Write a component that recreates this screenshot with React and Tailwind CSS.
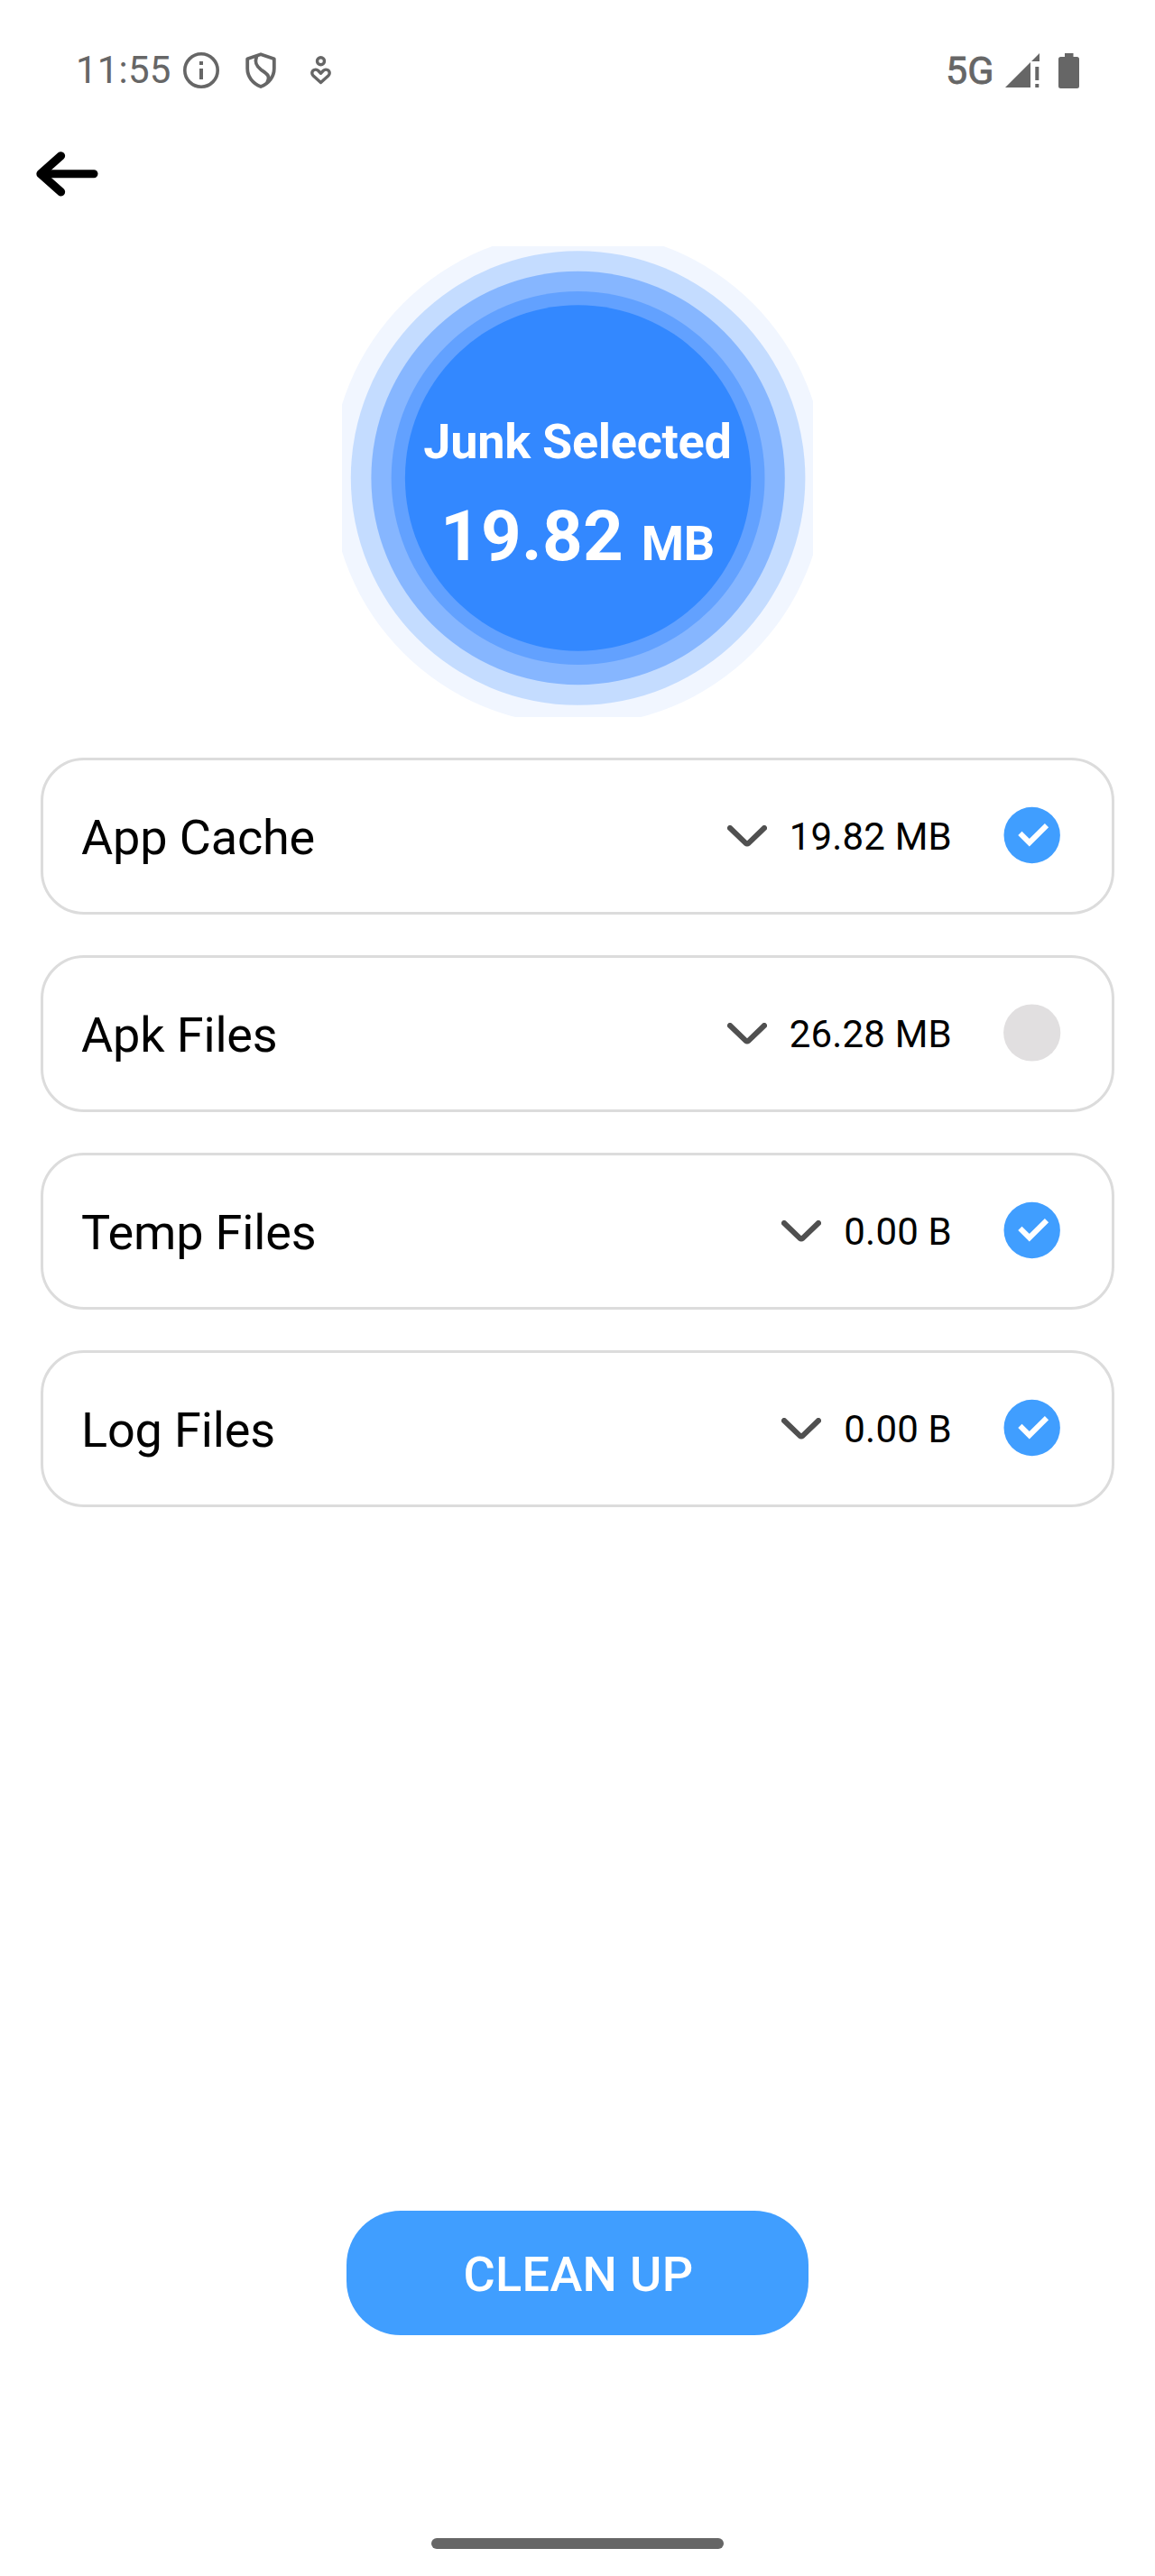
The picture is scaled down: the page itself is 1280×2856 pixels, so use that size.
import { useState } from 'react'

const initialItems = [
  { id: 'cache', name: 'App Cache', size: '19.82 MB', checked: true },
  { id: 'apk', name: 'Apk Files', size: '26.28 MB', checked: false },
  { id: 'temp', name: 'Temp Files', size: '0.00 B', checked: true },
  { id: 'log', name: 'Log Files', size: '0.00 B', checked: true },
]

function StatusBar() {
  return (
    <div className="flex h-[156px] items-center justify-between pl-[84px] pr-[84px] text-[#666666]">
      <div className="flex items-center">
        <span className="w-[119px] text-[42px] leading-none tracking-[0.2px] whitespace-nowrap">11:55</span>
        <svg className="h-10 w-10" viewBox="0 0 40 40" fill="none">
          <circle cx="20" cy="20" r="18.2" stroke="currentColor" strokeWidth="3.6" />
          <path d="M18 10h4v4h-4zM18 18h4v12h-4z" fill="currentColor" />
        </svg>
        <svg className="ml-[29px] h-10 w-[34px]" viewBox="0 0 34 40" fill="none" stroke="currentColor" strokeWidth="3.8" strokeLinejoin="round">
          <path d="M17 2.2L31.8 7.2V18C31.8 27 26 34.5 17 38C8 34.5 2.2 27 2.2 18V7.2Z" />
          <path d="M12.500 4.500C9.500 12 13 16 17.500 19.500C24 24 28 26 24 33.500" />
        </svg>
        <svg className="ml-[38px] h-8 w-[23px]" viewBox="0 0 23 32" fill="none" stroke="currentColor" strokeWidth="3.4" strokeLinejoin="round">
          <circle cx="11.5" cy="5.8" r="4" />
          <path d="M11.5 19.2L8.6 16.3C6 13.9 1.8 15.6 1.8 19C1.8 20.5 2.5 21.3 3.2 22L11.5 29.4L19.8 22C20.5 21.3 21.2 20.5 21.2 19C21.2 15.6 17 13.9 14.4 16.3Z" />
        </svg>
      </div>
      <div className="flex items-center">
        <span className="w-[66px] text-[43px] leading-none [-webkit-text-stroke:0.8px_#666666]">5G</span>
        <svg className="h-[38px] w-[38px]" viewBox="0 0 38 38" fill="currentColor">
          <path d="M0 38L28 10V38ZM29 9L38 0V9ZM33.3 15H37.3V30H33.3ZM33.3 34H37.3V38H33.3Z" />
        </svg>
        <svg className="ml-[21px] h-[39px] w-[23px]" viewBox="0 0 23 39" fill="currentColor">
          <path d="M7 0H16.500V4H20.500Q23 4 23 6.500V36.500Q23 39 20.500 39H2.500Q0 39 0 36.500V6.500Q0 4 2.500 4H7Z" />
        </svg>
      </div>
    </div>
  )
}

function JunkMeter() {
  return (
    <div className="relative mx-auto h-[522px] w-[522px]">
      <svg className="absolute inset-0 h-full w-full" viewBox="0 0 522 522">
        <circle cx="261.600" cy="257" r="274" fill="#f1f6ff" />
        <circle cx="261.600" cy="257" r="251.800" fill="#c4dcff" />
        <circle cx="261.600" cy="257" r="229.200" fill="#86b6ff" />
        <circle cx="261.600" cy="257" r="206.900" fill="#62a1ff" />
        <circle cx="261.600" cy="257" r="191.700" fill="#3388ff" />
      </svg>
      <div className="relative flex flex-col items-center pt-[185px] font-bold text-white">
        <div className="text-[54px] leading-[64px] tracking-[-0.27px]">Junk Selected</div>
        <div className="mt-[27px] flex items-baseline text-[78px] leading-[92px] tracking-[0.3px] whitespace-pre">
          {'19.82 '}
          <span className="text-[54px] tracking-[-0.27px]">MB</span>
        </div>
      </div>
    </div>
  )
}

function CheckCircle({ checked }) {
  return (
    <svg className="h-16 w-16" viewBox="0 0 64 64">
      {checked ? (
        <>
          <circle cx="31.700" cy="32" r="31.200" fill="#409eff" />
          <path d="M18.400 29.800L28.800 40.200L48 21.200" fill="none" stroke="#ffffff" strokeWidth="6" />
        </>
      ) : (
        <circle cx="31.700" cy="32" r="31.600" fill="#e1dfe0" />
      )}
    </svg>
  )
}

function JunkRow({ item, onToggle }) {
  return (
    <div className="flex h-[174px] items-center rounded-[48px] border-[3px] border-[#dcdcdc] pl-[42px] pr-[56px]">
      <span className="flex-1 pt-[3px] text-[54px] leading-[64px] tracking-[-0.15px]">{item.name}</span>
      <svg className="h-6 w-11" viewBox="0 0 44 24" fill="none" stroke="#505050" strokeWidth="6" strokeLinecap="round" strokeLinejoin="round">
        <path d="M3 3L20.500 19.800Q22 21 23.500 19.800L41 3" />
      </svg>
      <span className="ml-[25px] pt-[2px] text-[42px] leading-[50px] tracking-[0.2px] whitespace-nowrap">{item.size}</span>
      <button className="ml-[57px] -mt-[2px]" onClick={() => onToggle(item.id)}>
        <CheckCircle checked={item.checked} />
      </button>
    </div>
  )
}

function App() {
  const [items, setItems] = useState(initialItems)

  function handleToggle(id) {
    setItems((prev) => prev.map((i) => (i.id === id ? { ...i, checked: !i.checked } : i)))
  }

  return (
    <div className="flex h-[2856px] w-[1280px] flex-col bg-white font-['Roboto',sans-serif] text-black">
      <StatusBar />

      <div className="h-[117px] pl-10 pt-3">
        <svg className="h-[50px] w-[70px]" viewBox="0 0 70 50" fill="none" stroke="#000000" strokeLinecap="round" strokeLinejoin="round">
          <path d="M27.500 4.800L5 24.800L27.500 44.800" strokeWidth="9.300" />
          <path d="M8 24.800H64" strokeWidth="9" />
          <path d="M5 24.800L16 16V34Z" fill="#000000" stroke="none" />
        </svg>
      </div>

      <JunkMeter />

      <div className="mt-[45px] flex flex-col gap-[45px] px-[45px]">
        {items.map((item) => (
          <JunkRow key={item.id} item={item} onToggle={handleToggle} />
        ))}
      </div>

      <button className="mx-auto mt-auto h-[138px] w-[512px] rounded-[60px] bg-[#409eff] pt-[3px] pl-[2px] text-[54px] font-medium tracking-[0.35px] text-white">
        CLEAN UP
      </button>

      <div className="mx-auto mt-[225px] mb-[30px] h-3 w-[324px] shrink-0 rounded-full bg-[#666666]" />
    </div>
  )
}

export default App
